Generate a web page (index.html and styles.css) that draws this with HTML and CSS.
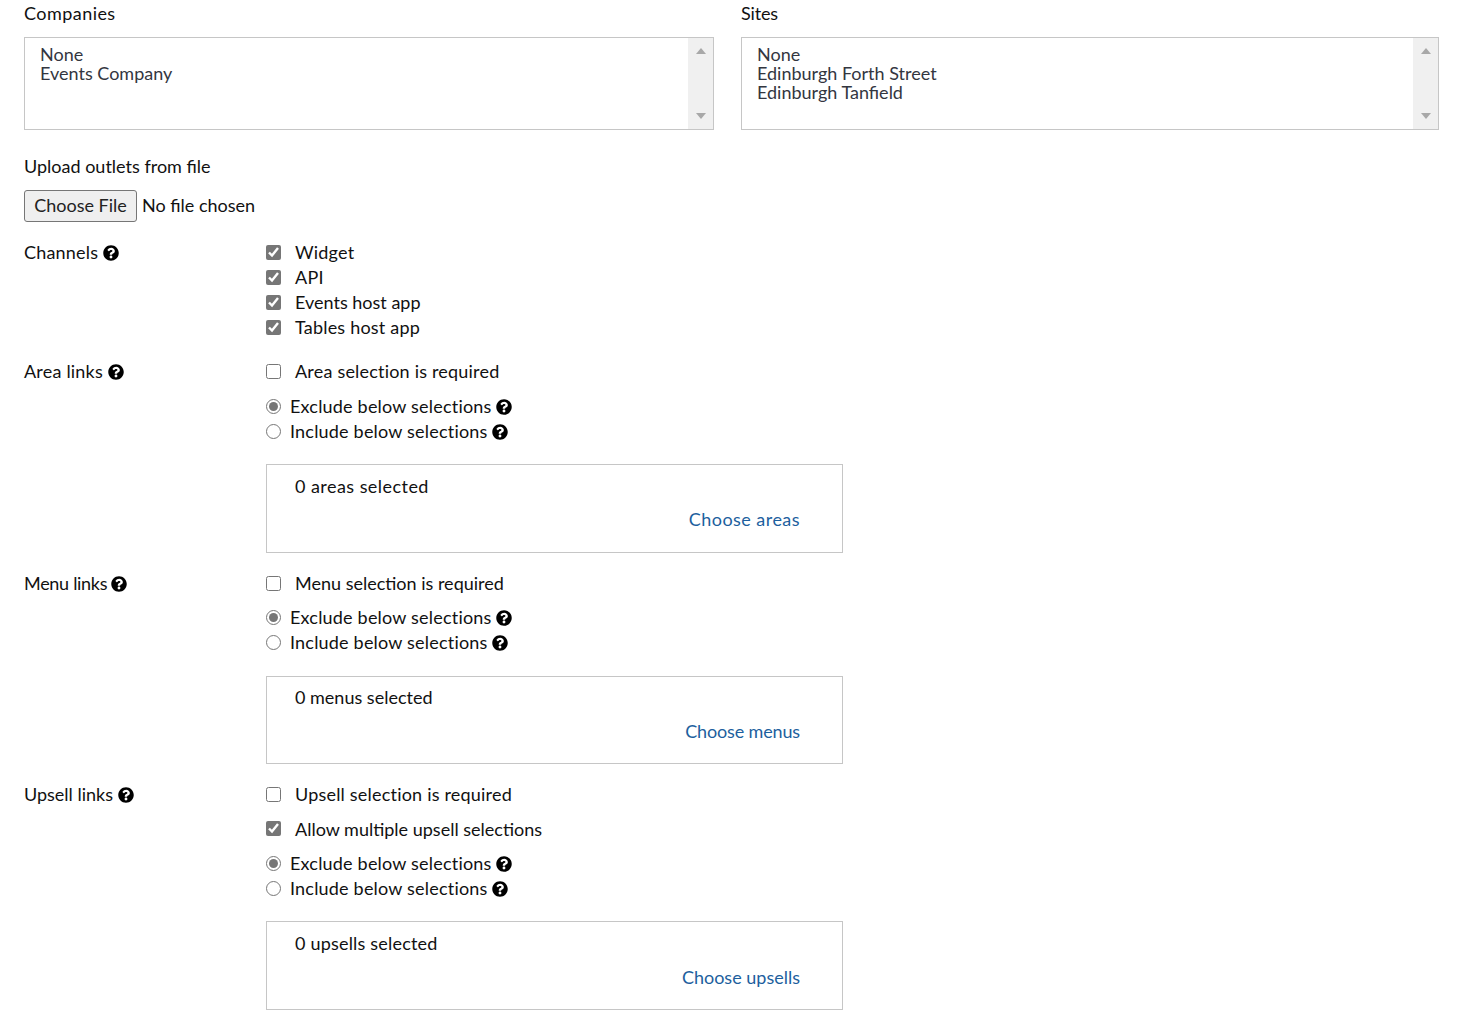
FILE: index.html
```html
<!DOCTYPE html>
<html lang="en">
<head>
<meta charset="utf-8">
<title>Outlet settings</title>
<link rel="stylesheet" href="styles.css">
</head>
<body>
<svg class="defs" aria-hidden="true"><symbol id="q" viewBox="0 0 512 512"><path d="M504 256c0 136.997-111.043 248-248 248S8 392.997 8 256C8 119.083 119.043 8 256 8s248 111.083 248 248zM262.655 90c-54.497 0-89.255 22.957-116.549 63.758-3.536 5.286-2.353 12.415 2.715 16.258l34.699 26.31c5.205 3.947 12.621 3.008 16.665-2.122 17.864-22.658 30.113-35.797 57.303-35.797 20.429 0 45.698 13.148 45.698 32.958 0 14.976-12.363 22.667-32.534 33.976C247.128 238.528 216 254.941 216 296v4c0 6.627 5.373 12 12 12h56c6.627 0 12-5.373 12-12v-1.333c0-28.462 83.186-29.647 83.186-106.667 0-58.002-60.165-102-116.531-102zM256 338c-25.365 0-46 20.635-46 46 0 25.364 20.635 46 46 46s46-20.636 46-46c0-25.365-20.635-46-46-46z"/></symbol></svg>
<main class="page">
  <div class="pickers">
    <div class="picker">
      <div class="label wide">Companies</div>
      <div class="listbox">
        <div class="options"><div>None</div><div>Events Company</div></div>
        <div class="scroll"><span class="up"></span><span class="down"></span></div>
      </div>
    </div>
    <div class="picker">
      <div class="label narrow">Sites</div>
      <div class="listbox">
        <div class="options"><div>None</div><div>Edinburgh Forth Street</div><div>Edinburgh Tanfield</div></div>
        <div class="scroll"><span class="up"></span><span class="down"></span></div>
      </div>
    </div>
  </div>

  <div class="upload">
    <div class="label plain">Upload outlets from file</div>
    <input class="file" type="file">
  </div>

  <section class="row channels">
    <div class="title">Channels <svg class="q"><use href="#q"/></svg></div>
    <div>
      <label class="line"><input type="checkbox" checked><span>Widget</span></label>
      <label class="line"><input type="checkbox" checked><span>API</span></label>
      <label class="line"><input type="checkbox" checked><span class="plain">Events host app</span></label>
      <label class="line"><input type="checkbox" checked><span>Tables host app</span></label>
    </div>
  </section>

  <section class="row">
    <div class="title">Area links <svg class="q"><use href="#q"/></svg></div>
    <div class="area-col">
      <label class="line"><input type="checkbox"><span>Area selection is required</span></label>
      <div class="radios">
        <label class="line radio"><input type="radio" name="a" checked><span>Exclude below selections <svg class="q"><use href="#q"/></svg></span></label>
        <label class="line radio"><input type="radio" name="a"><span>Include below selections <svg class="q"><use href="#q"/></svg></span></label>
      </div>
      <div class="panel">
        <div class="count wide">0 areas selected</div>
        <a class="choose wide" href="#">Choose areas</a>
      </div>
    </div>
  </section>

  <section class="row">
    <div class="title narrower">Menu links <svg class="q"><use href="#q"/></svg></div>
    <div class="menu-col">
      <label class="line plain"><input type="checkbox"><span>Menu selection is required</span></label>
      <div class="radios">
        <label class="line radio"><input type="radio" name="m" checked><span>Exclude below selections <svg class="q"><use href="#q"/></svg></span></label>
        <label class="line radio"><input type="radio" name="m"><span>Include below selections <svg class="q"><use href="#q"/></svg></span></label>
      </div>
      <div class="panel">
        <div class="count plain">0 menus selected</div>
        <a class="choose narrow" href="#">Choose menus</a>
      </div>
    </div>
  </section>

  <section class="row upsell">
    <div class="title plain">Upsell links <svg class="q"><use href="#q"/></svg></div>
    <div class="upsell-col">
      <label class="line"><input type="checkbox"><span>Upsell selection is required</span></label>
      <label class="line extra plain"><input type="checkbox" checked><span>Allow multiple upsell selections</span></label>
      <div class="radios">
        <label class="line radio"><input type="radio" name="u" checked><span>Exclude below selections <svg class="q"><use href="#q"/></svg></span></label>
        <label class="line radio"><input type="radio" name="u"><span>Include below selections <svg class="q"><use href="#q"/></svg></span></label>
      </div>
      <div class="panel">
        <div class="count">0 upsells selected</div>
        <a class="choose plain" href="#">Choose upsells</a>
      </div>
    </div>
  </section>
</main>
</body>
</html>
```
FILE: styles.css
```css
* { box-sizing: border-box; }
html, body { margin: 0; padding: 0; background: #fff; }
body {
  font-family: "Lato", "Liberation Sans", sans-serif;
  font-size: 18px;
  line-height: 25px;
  letter-spacing: 0.2px;
  color: #111;
  overflow: hidden;
}
.wide { letter-spacing: 0.45px; }
.plain { letter-spacing: 0; }
.narrow { letter-spacing: -0.15px; }
.narrower { letter-spacing: -0.3px; }
.defs { position: absolute; width: 0; height: 0; }
.page { padding: 1px 24px 0 24px; }

.pickers { display: grid; grid-template-columns: 690px 698px; column-gap: 27px; }
.label { height: 25px; }
.listbox {
  display: flex;
  height: 93px;
  margin-top: 11px;
  border: 1px solid #c6c6c6;
}
.options {
  flex: 1;
  padding: 7px 15px 0;
  line-height: 19px;
  letter-spacing: 0;
  color: #33363f;
}
.scroll {
  width: 25px;
  background: #f0f0f0;
  display: flex;
  flex-direction: column;
  justify-content: space-between;
  align-items: center;
  padding: 10px 0 10px;
}
.up, .down { width: 0; height: 0; border-left: 5.5px solid transparent; border-right: 5.5px solid transparent; }
.up { border-bottom: 6px solid #a8a8a8; }
.down { border-top: 6px solid #a8a8a8; }

.upload { margin-top: 24px; }
.file {
  display: block;
  margin-top: 11px;
  font: inherit;
  color: #111;
  height: 32px;
  width: 400px;
}
.file::file-selector-button {
  font: inherit;
  letter-spacing: 0;
  color: #222;
  width: 113px;
  height: 32px;
  margin-right: 5px;
  padding: 0 0 2px;
  background: #efefef;
  border: 1px solid #767676;
  border-radius: 3px;
}

.row { display: grid; grid-template-columns: 242px 577px; margin-top: 18.9px; }
.channels { margin-top: 18px; margin-bottom: 19.4px; }
.upsell { margin-top: 18.2px; }
.title { height: 25px; }
.q { width: 16px; height: 16px; vertical-align: -2px; fill: #000; }

.line { display: flex; align-items: center; height: 25px; }
.line input { flex: none; width: 15px; height: 15px; margin: 0 14px 1px 0; accent-color: #767676; }
.radio input { margin-right: 9px; }
.extra { margin-top: 9.6px; }
.radios { margin-top: 9.6px; }
.area-col .radios { margin-top: 10px; }
.menu-col .radios { margin-top: 8.9px; }
.upsell-col .radios { margin-top: 9.4px; }

.panel {
  height: 88.6px;
  margin-top: 19.6px;
  border: 1px solid #c6c6c6;
  padding: 9px 42px 0 28px;
  display: flex;
  flex-direction: column;
}
.menu-col .panel { margin-top: 20.2px; padding-top: 8.6px; }
.choose {
  align-self: flex-end;
  margin-top: 8px;
  color: #1d5f9e;
  text-decoration: none;
}
.menu-col .choose { margin-top: 8.4px; }
.upsell-col .choose { margin-top: 9px; }
```
